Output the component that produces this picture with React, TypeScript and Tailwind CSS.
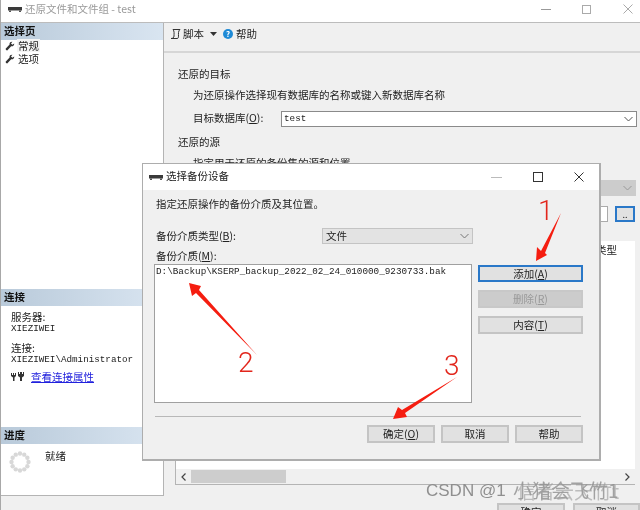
import React from "react";

const FONT = { fontFamily: '"Noto Sans CJK SC", "Liberation Sans", sans-serif' };
const MONO = { fontFamily: '"Liberation Mono", monospace' };

function TapeIcon({ className }: { className?: string }) {
  return (
    <svg width="14" height="6" viewBox="0 0 14 6" className={className}>
      <rect x="0" y="1" width="14" height="3.5" fill="#3a3a3a" />
      <rect x="1" y="4.5" width="2" height="1.5" fill="#555" />
      <rect x="11" y="4.5" width="2" height="1.5" fill="#555" />
    </svg>
  );
}

function Wrench() {
  return (
    <svg width="10" height="10" viewBox="0 0 10 10" className="shrink-0">
      <path d="M1 9 L0.6 7.8 L4.6 3.6 C4.2 2 5.4 0.6 7.4 0.8 L6 2.4 L7.4 3.8 L9.2 2.4 C9.4 4.4 7.8 5.6 6.2 5.2 L2.2 9.4 Z" fill="#333" />
    </svg>
  );
}

function Header({ children }: { children: React.ReactNode }) {
  return (
    <div className="h-[17px] shrink-0 flex items-center pl-[3px] pb-[2px] text-[10.5px] font-bold text-[#111] bg-gradient-to-r from-[#b9cada] to-[#d9e5f1]">
      {children}
    </div>
  );
}

function Btn({ children, className }: { children: React.ReactNode; className?: string }) {
  return (
    <div className={"flex items-center justify-center border-2 border-[#c4c4c4] bg-[#e1e1e1] text-[10.5px] text-[#222] " + (className ?? "")}>
      {children}
    </div>
  );
}

function Chevron({ color = "#555" }: { color?: string }) {
  return (
    <svg width="9" height="6" viewBox="0 0 9 6">
      <path d="M0.5 1 L4.5 5 L8.5 1" fill="none" stroke={color} strokeWidth="1" />
    </svg>
  );
}

function Spinner() {
  const dots = Array.from({ length: 12 }, (_, i) => (i * Math.PI) / 6);
  return (
    <svg width="22" height="22" viewBox="0 0 22 22" className="shrink-0">
      {dots.map((a, i) => (
        <circle key={i} cx={11 + 8.5 * Math.cos(a)} cy={11 + 8.5 * Math.sin(a)} r="2.2" fill="#d8d8d8" />
      ))}
    </svg>
  );
}

function Sidebar() {
  return (
    <div className="w-[163px] h-[473px] shrink-0 flex flex-col bg-white border-r border-b border-[#b4b4b4]">
      <Header>选择页</Header>
      <div className="flex-1 mt-[-1px] text-[10.5px] text-[#222] leading-[13px]">
        <div className="flex items-center gap-[2px] pl-[4px]"><Wrench /><span className="bg-[#f4f4f4] px-[1px]">常规</span></div>
        <div className="flex items-center gap-[2px] pl-[4px]"><Wrench /><span className="px-[1px]">选项</span></div>
      </div>
      <Header>连接</Header>
      <div className="h-[121px] shrink-0 pl-[10px] pt-[5px] text-[#222]">
        <div className="text-[10.5px] leading-[12px]">服务器:</div>
        <div className="text-[9.25px] leading-[11px]" style={MONO}>XIEZIWEI</div>
        <div className="text-[10.5px] leading-[12px] mt-[8px]">连接:</div>
        <div className="text-[9.25px] leading-[11px]" style={MONO}>XIEZIWEI\Administrator</div>
        <div className="flex items-center gap-[7px] mt-[4px]">
          <svg width="13" height="11" viewBox="0 0 13 11">
            <path d="M0 2 L1 2 L1 4 L2 4 L2 2 L3 2 L3 4 L4 4 L4 2 L5 2 L5 5 L3.5 6.5 L3.5 10 L2 10 L2 6.5 L0 5 Z M7 1 L8 1 L8 3 L9 3 L9 1 L11 1 L11 3 L12 3 L12 1 L13 1 L13 5 L11 6.5 L11 10 L9 10 L9 6.5 L7 5 Z" fill="#333" />
          </svg>
          <span className="text-[10.5px] text-[#2222dd] underline">查看连接属性</span>
        </div>
      </div>
      <Header>进度</Header>
      <div className="h-[51px] shrink-0 flex pl-[8px] pt-[7px] gap-[14px]">
        <Spinner />
        <span className="text-[10.5px] leading-[12px] text-[#222] mt-[-1px]">就绪</span>
      </div>
    </div>
  );
}

function MainPane() {
  return (
    <div className="flex-1 flex flex-col min-w-0">
      <div className="h-[22px] flex items-center pl-[6px] pb-[6px] text-[10.5px] text-[#222] border-b-2 border-[#d6d6d6] box-content">
        <svg width="12" height="12" viewBox="0 0 12 12">
          <path d="M3 1.5 H10 M3 1.5 C4.5 3 4 6 4 8 C4 9.5 3 10.5 1 10.5 H7 C8.5 10.5 8.5 9 8.5 8 C8.5 6 8 3 10 1.5" fill="none" stroke="#333" strokeWidth="1" />
        </svg>
        <span className="ml-[1px]">脚本</span>
        <svg width="7" height="4" viewBox="0 0 7 4" className="ml-[6px]"><path d="M0 0 H7 L3.5 4 Z" fill="#333" /></svg>
        <span className="ml-[6px] w-[10px] h-[10px] rounded-full bg-[#1e8ad6] text-white text-[8px] font-bold flex items-center justify-center leading-none">?</span>
        <span className="ml-[3px]">帮助</span>
      </div>
      <div className="flex flex-col pl-[14px] text-[10.5px] text-[#222]">
        <div className="mt-[14px] leading-[14px]">还原的目标</div>
        <div className="mt-[7px] ml-[15px] leading-[14px]">为还原操作选择现有数据库的名称或键入新数据库名称</div>
        <div className="mt-[9px] ml-[15px] flex items-center h-[16px]">
          <span className="w-[88px] mt-[-2px]">目标数据库(<u>O</u>):</span>
          <div className="w-[356px] h-[16px] bg-white border border-[#8a8a8a] flex items-center justify-between pl-[2px] pr-[3px]">
            <span className="text-[9.3px]" style={MONO}>test</span>
            <Chevron />
          </div>
        </div>
        <div className="mt-[8px] leading-[14px]">还原的源</div>
        <div className="mt-[7px] ml-[15px] leading-[14px]">指定用于还原的备份集的源和位置</div>
        <div className="mt-[10px] self-end mr-[4px] w-[200px] h-[16px] bg-[#cccccc] flex items-center justify-end pr-[4px]">
          <Chevron color="#999" />
        </div>
        <div className="mt-[10px] self-end mr-[5px] flex items-center gap-[7px]">
          <div className="w-[200px] h-[16px] bg-white border border-[#aaa]" />
          <div className="w-[20px] h-[16px] border-2 border-[#2a78c8] bg-[#e1e1e1] flex items-center justify-center text-[9px] leading-none">..</div>
        </div>
        <div className="mt-[19px] ml-[-3px] mr-[5px] h-[244px] bg-white border-b border-l border-[#b4b4b4] flex flex-col">
          <div className="flex-1 pt-[2px] pr-[18px] text-right leading-[14px]">类型</div>
          <div className="h-[15px] bg-[#f0f0f0] flex items-center">
            <div className="w-[15px] flex items-center justify-center">
              <svg width="5" height="8" viewBox="0 0 5 8"><path d="M4.5 0.5 L1 4 L4.5 7.5" fill="none" stroke="#444" strokeWidth="1.2" /></svg>
            </div>
            <div className="w-[95px] h-[13px] bg-[#cdcdcd]" />
            <div className="flex-1" />
            <div className="w-[15px] flex items-center justify-center">
              <svg width="5" height="8" viewBox="0 0 5 8"><path d="M0.5 0.5 L4 4 L0.5 7.5" fill="none" stroke="#444" strokeWidth="1.2" /></svg>
            </div>
          </div>
        </div>
        <div className="mt-[18px] self-end flex gap-[8px]">
          <Btn className="w-[68px] h-[18px]">确定</Btn>
          <Btn className="w-[67px] h-[18px]">取消</Btn>
        </div>
      </div>
    </div>
  );
}

function Dialog() {
  return (
    <div className="absolute left-[141px] top-[163px] w-[459px] h-[298px] bg-[#f0f0f0] border-2 border-[#adadad] border-t-1 border-l-1 flex flex-col text-[10.5px] text-[#222]">
      <div className="h-[26px] shrink-0 bg-white flex items-center pl-[6px]">
        <TapeIcon />
        <span className="ml-[3px] mt-[-3px]">选择备份设备</span>
        <div className="ml-auto flex items-center">
          <svg width="11" height="1" viewBox="0 0 11 1" className="mr-[31px]"><rect width="11" height="1" fill="#bbbbbb" /></svg>
          <svg width="10" height="10" viewBox="0 0 10 10" className="mr-[31px]"><rect x="0.5" y="0.5" width="9" height="9" fill="none" stroke="#333" /></svg>
          <svg width="10" height="10" viewBox="0 0 10 10" className="mr-[15px]"><path d="M0.5 0.5 L9.5 9.5 M9.5 0.5 L0.5 9.5" stroke="#333" /></svg>
        </div>
      </div>
      <div className="pl-[13px] mt-[7px] leading-[14px]">指定还原操作的备份介质及其位置。</div>
      <div className="pl-[13px] mt-[17px] flex items-center h-[16px]">
        <span className="w-[166px]">备份介质类型(<u>B</u>):</span>
        <div className="w-[151px] h-[16px] bg-[#e3e3e3] border border-[#c4c4c4] flex items-center justify-between pl-[3px] pr-[3px]">
          <span>文件</span><Chevron color="#777" />
        </div>
      </div>
      <div className="pl-[13px] mt-[5px] leading-[14px]">备份介质(<u>M</u>):</div>
      <div className="flex pl-[11px] mt-[1px]">
        <div className="w-[318px] h-[139px] bg-white border border-[#a0a0a0] pl-[1px] pt-[1px]">
          <div className="text-[9.3px] leading-[12px] text-[#222]" style={MONO}>D:\Backup\KSERP_backup_2022_02_24_010000_9230733.bak</div>
        </div>
        <div className="ml-[6px] w-[105px] flex flex-col gap-[8px] mt-[1px]">
          <Btn className="h-[17px] !border-[#2a78c8]"><span>添加(<u>A</u>)</span></Btn>
          <Btn className="h-[18px] !bg-[#cccccc] !text-[#999] !border-[#c8c8c8]"><span>删除(<u>R</u>)</span></Btn>
          <Btn className="h-[18px]"><span>内容(<u>T</u>)</span></Btn>
        </div>
      </div>
      <div className="ml-[12px] mr-[18px] mt-[13px] border-t border-[#b8b8b8]" />
      <div className="mt-[8px] pr-[16px] flex justify-end gap-[6px]">
        <Btn className="w-[68px] h-[18px]"><span>确定(<u>O</u>)</span></Btn>
        <Btn className="w-[68px] h-[18px]">取消</Btn>
        <Btn className="w-[68px] h-[18px]">帮助</Btn>
      </div>
    </div>
  );
}

function Annotations() {
  const wm = '"Noto Sans CJK SC", sans-serif';
  return (
    <>
      <svg width="640" height="510" viewBox="0 0 640 510" className="absolute left-0 top-0 pointer-events-none">
        <polygon points="535,261 536,247 540,251 560,213 544,253 546,255" fill="#f51d10" />
        <polygon points="188,283 200,286 198,290 256,355 195,293 191,296" fill="#f51d10" />
        <polygon points="392,419 397,407 401,410 456,377 404,413 406,417" fill="#f51d10" />
      </svg>
      <span className="absolute left-[537px] top-[195px] text-[28px] leading-[32px] font-light text-[#e2261c]" style={{ fontFamily: "Roboto, sans-serif" }}>1</span>
      <span className="absolute left-[237px] top-[347px] text-[28px] leading-[32px] font-light text-[#e2261c]" style={{ fontFamily: "Roboto, sans-serif" }}>2</span>
      <span className="absolute left-[443px] top-[350px] text-[28px] leading-[32px] font-light text-[#e2261c]" style={{ fontFamily: "Roboto, sans-serif" }}>3</span>
      <span className="absolute left-[425px] top-[480px] text-[17px] leading-[22px] text-[#8f8f8f] whitespace-nowrap" style={{ fontFamily: '"Liberation Sans", sans-serif' }}>CSDN @1</span>
      <span className="absolute left-[512px] top-[479px] text-[19px] leading-[22px] text-[#8f8f8f] opacity-80 whitespace-nowrap" style={{ fontFamily: wm }}>小猪会飞竹1</span>
      <span className="absolute left-[516px] top-[480px] text-[19px] leading-[22px] text-[#9a9a9a] opacity-60 whitespace-nowrap" style={{ fontFamily: wm }}>信者云天竹t</span>
    </>
  );
}

export default function App() {
  return (
    <div className="relative w-[640px] h-[510px] overflow-hidden bg-[#f0f0f0] border-l border-[#a8a8a8] blur-[0.4px]" style={FONT}>
      <div className="h-[23px] bg-white border-b border-[#bcbcbc] flex items-center pl-[7px] pb-[4px]">
        <TapeIcon />
        <span className="ml-[3px] text-[10.5px] text-[#9a9a9a]">还原文件和文件组 - test</span>
        <div className="ml-auto flex items-center">
          <svg width="10" height="1" viewBox="0 0 10 1" className="mr-[31px]"><rect width="10" height="1" fill="#999" /></svg>
          <svg width="9" height="9" viewBox="0 0 9 9" className="mr-[32px]"><rect x="0.5" y="0.5" width="8" height="8" fill="none" stroke="#aaa" /></svg>
          <svg width="10" height="10" viewBox="0 0 10 10" className="mr-[7px]"><path d="M0.5 0.5 L9.5 9.5 M9.5 0.5 L0.5 9.5" stroke="#aaa" /></svg>
        </div>
      </div>
      <div className="flex">
        <Sidebar />
        <MainPane />
      </div>
      <Dialog />
      <Annotations />
    </div>
  );
}
